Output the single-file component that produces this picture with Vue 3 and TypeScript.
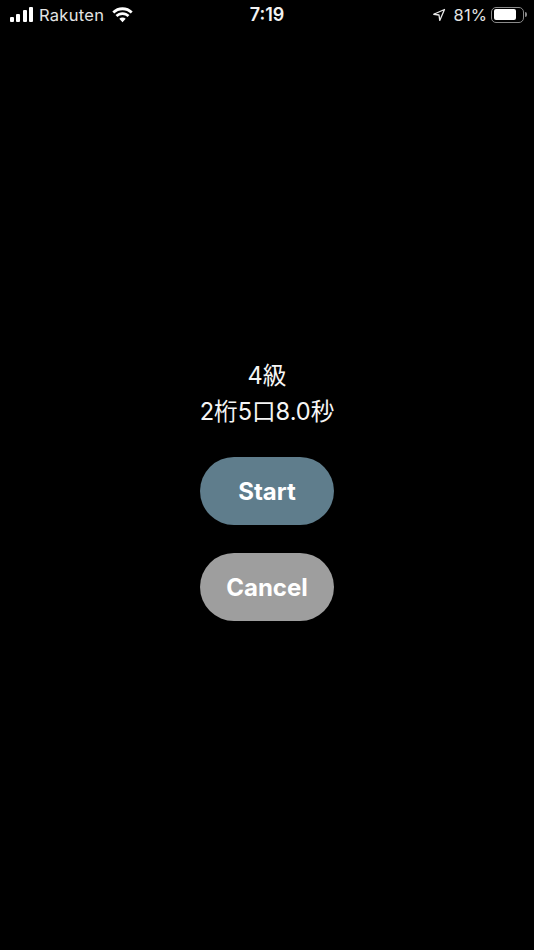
<script setup lang="ts">
const bars: number[] = [5, 8, 12, 15]
</script>

<template>
  <div class="screen">
    <header class="status">
      <div class="side left">
        <div class="signal">
          <span v-for="h in bars" :key="h" class="bar" :style="{ height: h + 'px' }"></span>
        </div>
        <span class="carrier">Rakuten</span>
        <svg class="wifi" width="21" height="16" viewBox="1 0.5 19 14" aria-hidden="true">
          <path d="M10.500 3.200c2.900 0 5.500 1.100 7.500 3l1.700-1.800C17.300 2 14 .6 10.500.6S3.700 2 1.300 4.400L3 6.200c2-1.900 4.600-3 7.500-3z" fill="#fff"/>
          <path d="M10.500 7.500c1.800 0 3.400.7 4.600 1.800l1.700-1.800c-1.700-1.500-3.900-2.500-6.300-2.500s-4.600 1-6.300 2.500l1.700 1.800c1.200-1.100 2.800-1.800 4.600-1.800z" fill="#fff"/>
          <path d="M10.500 9.700c-1.100 0-2.100.4-2.900 1.100l2.900 3.200 2.900-3.200c-.8-.7-1.800-1.100-2.900-1.100z" fill="#fff"/>
        </svg>
      </div>
      <div class="time">7:19</div>
      <div class="side right">
        <svg class="loc" width="14" height="14" viewBox="0 0 13 13" aria-hidden="true">
          <path d="M11.600 1.400 1.600 5.800l4.900.7.700 5z" fill="none" stroke="#e8e8e8" stroke-width="1.200" stroke-linejoin="round"/>
        </svg>
        <span class="pct">81%</span>
        <div class="battery">
          <div class="shell"><div class="fill"></div></div>
          <div class="nub"></div>
        </div>
      </div>
    </header>

    <main class="content">
      <p class="level">4級</p>
      <p class="detail">2桁5口8.0秒</p>
      <button class="pill start" type="button">Start</button>
      <button class="pill cancel" type="button">Cancel</button>
    </main>
  </div>
</template>

<style>
html, body { margin: 0; background: #000; }
</style>

<style scoped>
.screen {
  width: 534px;
  height: 950px;
  background: #000;
  color: #fff;
  display: flex;
  flex-direction: column;
  overflow: hidden;
  font-family: Inter, "Noto Sans CJK JP", sans-serif;
}
.status {
  height: 29px;
  flex: none;
  display: grid;
  grid-template-columns: 1fr auto 1fr;
  align-items: center;
  padding: 0 7px;
  color: #e4e4e4;
}
.side { display: flex; align-items: center; }
.left { padding-left: 3px; }
.right { justify-content: flex-end; }
.signal { display: flex; align-items: flex-end; gap: 2.300px; height: 15px; }
.bar { width: 4px; background: #fff; border-radius: 1px; }
.carrier { margin-left: 6px; font-size: 16.500px; letter-spacing: 0.3px; }
.wifi { margin-left: 8px; }
.time { font-size: 18px; font-weight: 600; color: #f2f2f2; }
.loc { margin-right: 8px; }
.pct { font-size: 16.500px; letter-spacing: 0.1px; }
.battery { margin-left: 4px; display: flex; align-items: center; }
.shell {
  width: 33px;
  height: 16px;
  box-sizing: border-box;
  border: 1.500px solid #8a8a8a;
  border-radius: 5px;
  padding: 1.500px;
}
.fill { width: 82%; height: 100%; background: #fff; border-radius: 2px; }
.nub { width: 2px; height: 5px; margin-left: 1px; background: #8a8a8a; border-radius: 0 2px 2px 0; }
.content {
  display: flex;
  flex-direction: column;
  align-items: center;
  padding-top: 329px;
}
.level, .detail {
  margin: 0;
  font-size: 23.600px;
  line-height: 36px;
  color: #f5f5f5;
}
.pill {
  width: 134px;
  height: 68px;
  border: 0;
  border-radius: 34px;
  color: #fff;
  font: 700 24px Inter, sans-serif;
  padding: 0;
}
.start { margin-top: 27px; background: #5f7d8c; }
.cancel { margin-top: 28px; background: #9e9e9e; }
</style>
